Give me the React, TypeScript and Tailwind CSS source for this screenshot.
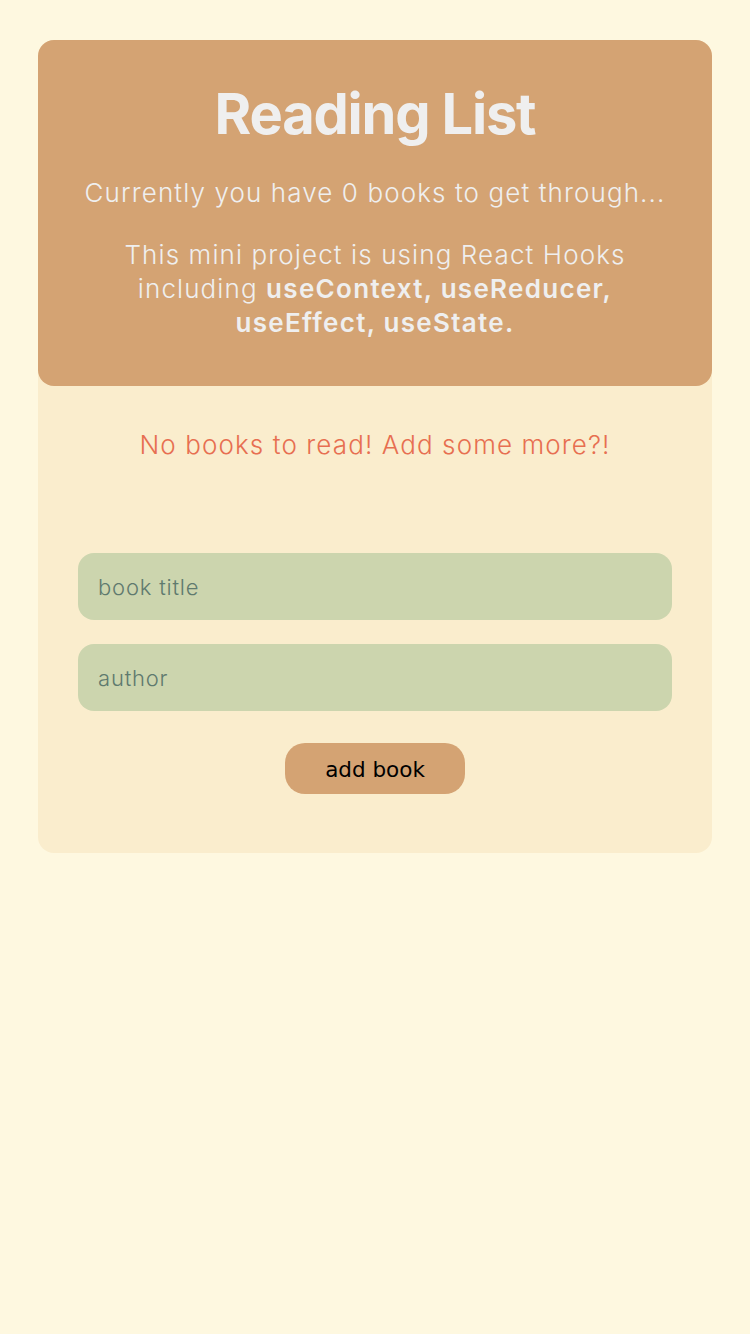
import React, { useState } from 'react';

export default function App() {
  const [title, setTitle] = useState('');
  const [author, setAuthor] = useState('');
  const books: { title: string; author: string }[] = [];

  return (
    <div className="min-h-screen bg-[#fef8e0] px-[38px] pt-[40px] font-['Inter',sans-serif]">
      <div className="rounded-[16px] bg-[#faedcd]">
        <div className="rounded-[16px] bg-[#d4a373] px-6 pt-[40px] pb-[46px] text-center text-[#efefef]">
          <h1 className="text-[56px] font-bold leading-[68px] tracking-[-1.2px]">Reading List</h1>
          <p className="mt-[28px] text-[26px] leading-[34px] font-light tracking-[1.1px]">
            Currently you have {books.length} books to get through...
          </p>
          <p className="mt-[28px] text-[26px] leading-[34px] font-light tracking-[1.1px] px-[24px]">
            This mini project is using React Hooks including{' '}
            <span className="font-semibold tracking-[1.3px]">useContext, useReducer, useEffect, useState.</span>
          </p>
        </div>

        <p className="mt-[42px] text-center text-[26px] leading-[34px] font-light tracking-[1.1px] text-[#e76f51]">
          No books to read! Add some more?!
        </p>

        <form
          className="mt-[91px] flex flex-col items-center px-[40px] pb-[59px]"
          onSubmit={(e) => e.preventDefault()}
        >
          <input
            type="text"
            placeholder="book title"
            value={title}
            onChange={(e) => setTitle(e.target.value)}
            className="h-[67px] w-full rounded-[16px] bg-[#ccd5ae] px-[20px] text-[22px] font-light tracking-[0.8px] text-[#3d5a50] placeholder:text-[#5f7a6e] outline-none"
          />
          <input
            type="text"
            placeholder="author"
            value={author}
            onChange={(e) => setAuthor(e.target.value)}
            className="mt-[24px] h-[67px] w-full rounded-[16px] bg-[#ccd5ae] px-[20px] text-[22px] font-light tracking-[0.8px] text-[#3d5a50] placeholder:text-[#5f7a6e] outline-none"
          />
          <button
            type="submit"
            className="mt-[32px] h-[51px] w-[180px] rounded-[20px] bg-[#d4a373] pt-[3px] font-['DejaVu_Sans',sans-serif] text-[21.5px] text-black"
          >
            add book
          </button>
        </form>
      </div>
    </div>
  );
}
